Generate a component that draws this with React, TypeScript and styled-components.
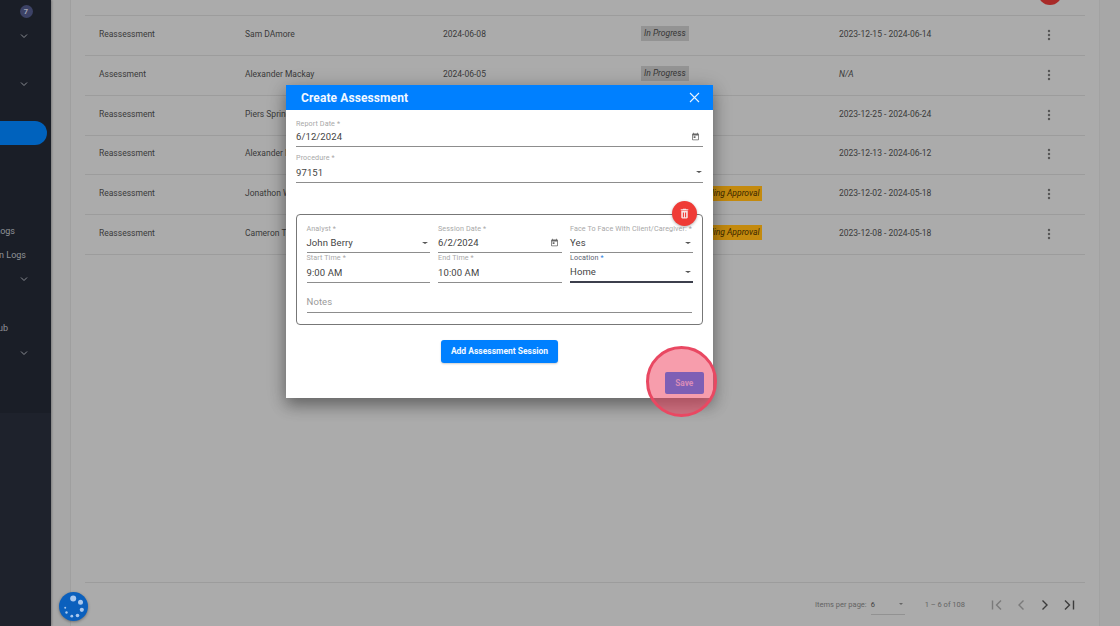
import React from 'react';
import styled, { createGlobalStyle } from 'styled-components';

const Global = createGlobalStyle`
  html, body { margin: 0; padding: 0; height: 626px; overflow: hidden; }
  body { font-family: Roboto, "Liberation Sans", sans-serif; }
  * { box-sizing: border-box; }
`;

const Page = styled.div`
  position: relative; width: 1120px; height: 626px; display: flex; overflow: hidden; background: #a7a7a7;
`;
const Sidebar = styled.aside`
  width: 51px; flex: none; height: 626px; background: #1e222c; display: flex; flex-direction: column; box-shadow: 1px 0 2px rgba(0,0,0,.25);
`;
const SideTop = styled.div`
  height: 414px; background: #1a1e27; margin-top: -1px; display: flex; flex-direction: column; padding-right: 4px;
`;
const SideItem = styled.div<{ $active?: boolean }>`
  height: 24.4px; flex: none; display: flex; align-items: center; justify-content: flex-end;
  font-size: 9px; color: #8f9297; overflow: hidden;
  ${p => p.$active ? 'background:#0062bd;border-radius:0 12px 12px 0;' : ''}
`;
const SideLabel = styled.span<{ $right: number }>`
  margin-right: ${p => p.$right}px; white-space: nowrap;
`;
const Chevron = styled.svg`
  width: 8px; height: 6px; margin-right: 19.5px; color: #8a8d93;
`;
const Badge = styled.span`
  width: 13px; height: 13px; border-radius: 50%; background: #3c4266; color: #a7a9b5; font-size: 7.5px; font-weight: 700;
  display: flex; align-items: center; justify-content: center; margin-right: 14.5px; margin-top: 1px;
`;
const Main = styled.main`
  flex: 1; min-width: 0; height: 626px; padding-left: 19px; padding-right: 20px; display: flex;
`;
const Panel = styled.section`
  flex: 1; min-width: 0; border-left: 1px solid #9f9f9f; border-right: 1px solid #a2a2a2; background: #ababab;
  padding: 0 14px; display: flex; flex-direction: column;
`;
const TableArea = styled.div`
  flex: 1; padding-top: 15px; min-height: 0;
`;
const Row = styled.div`
  height: 39.85px; display: grid; grid-template-columns: 146px 198px 198px 198px 202px 1fr; align-items: center;
  border-top: 1px solid #9c9c9c; padding-left: 14px; font-size: 8.5px; color: #3a3a3a; padding-bottom: 3px;
  &:last-child { border-bottom: 1px solid #9c9c9c; height: 40.5px; }
`;
const Status = styled.span<{ $amber?: boolean }>`
  justify-self: start; font-style: italic; padding: 0 3px; height: 15px; line-height: 15px; white-space: nowrap;
  background: ${p => p.$amber ? '#c48a0e' : '#939393'}; color: ${p => p.$amber ? '#3a2800' : '#363636'};
  margin-left: ${p => p.$amber ? 51 : 0}px;
`;
const Italic = styled.span` font-style: italic; `;
const Actions = styled.span`
  display: flex; justify-content: flex-end; padding-right: 34px; margin-top: 2px;
`;
const Footer = styled.footer`
  height: 44px; flex: none; border-top: 1px solid #9c9c9c; display: flex; align-items: center; justify-content: flex-end;
  font-size: 7.5px; color: #636363; padding-right: 4px;
`;
const PerPage = styled.span` margin-right: 4px; `;
const PageSelect = styled.span`
  width: 34px; height: 21px; border-bottom: 1px solid #929292; display: flex; align-items: center; justify-content: space-between;
  padding-right: 2px; color: #3f3f3f;
`;
const Range = styled.span` margin: 0 20px 0 20px; `;
const PageIcon = styled.svg<{ $dim?: boolean }>`
  width: 24px; height: 24px; color: ${p => p.$dim ? '#7a7a7a' : '#3c3c3c'};
`;
const Caret = styled.span`
  width: 0; height: 0; border-left: 2.5px solid transparent; border-right: 2.5px solid transparent; border-top: 2.5px solid #666;
  flex: none;
`;
const TopFab = styled.div`
  position: absolute; left: 1038px; top: -19px; width: 24px; height: 24px; border-radius: 50%; background: #a82a28;
`;
const Widget = styled.div`
  position: absolute; left: 58.5px; top: 591.5px; width: 29.5px; height: 29.5px; border-radius: 50%; background: #0b60bd; box-shadow: 0 1px 3px rgba(0,0,0,.35);
  svg { display: block; }
`;
const Dialog = styled.div`
  position: absolute; left: 286px; top: 85px; width: 427px; height: 313px; background: #fff; display: flex; flex-direction: column;
  box-shadow: 0 8px 14px rgba(0,0,0,.28), 0 3px 18px rgba(0,0,0,.22);
`;
const DialogHead = styled.header`
  height: 25px; flex: none; background: #0080ff; display: flex; align-items: center; justify-content: space-between;
  padding: 0 13px 0 15px; color: #f2f8ff; font-size: 12px; font-weight: 700; letter-spacing: .1px;
`;
const Body = styled.div`
  flex: 1; padding: 10px 10px 0 10px; display: flex; flex-direction: column;
`;
const Field = styled.div<{ $focus?: boolean; $h: number }>`
  display: flex; flex-direction: column; height: ${p => p.$h}px; min-width: 0;
  padding-bottom: ${p => p.$h === 27 ? 2 : 0}px;
  border-bottom: ${p => p.$focus ? '2px solid #3c3f4c' : '1px solid #8d8d8d'};
`;
const Label = styled.label<{ $blue?: boolean }>`
  font-size: 7.2px; line-height: 8px; color: ${p => p.$blue ? '#5a6270' : '#a8a8a8'}; white-space: nowrap; letter-spacing: .1px;
  b { font-weight: 400; color: #2a7fe0; }
`;
const Value = styled.div`
  flex: 1; display: flex; align-items: center; justify-content: space-between; font-size: 9.5px; color: #444; letter-spacing: .1px;
`;
const Placeholder = styled(Value)` color: #9a9a9a; `;
const Procedure = styled.div` margin-top: 7px; `;
const SessionBox = styled.div`
  position: relative; margin-top: 31px; height: 111px; border: 1px solid #777; border-radius: 4px; padding: 10px 10px 0 9.5px;
  display: flex; flex-direction: column;
`;
const Grid3 = styled.div`
  display: grid; grid-template-columns: 123.5px 124px 123px; column-gap: 8px; row-gap: 1px;
`;
const NotesField = styled.div`
  margin-top: 7px; height: 23px; border-bottom: 1px solid #8d8d8d; display: flex;
`;
const DeleteFab = styled.div`
  position: absolute; right: 5px; top: -14px; width: 25px; height: 25px; border-radius: 50%; background: #ef3b36;
  box-shadow: 0 1px 3px rgba(0,0,0,.3); display: flex; align-items: center; justify-content: center;
`;
const AddRow = styled.div`
  display: flex; justify-content: center; margin-top: 15px;
`;
const AddButton = styled.button`
  width: 116.5px; height: 22.5px; background: #0080ff; color: #f4f9ff; border: 0; border-radius: 3px; font: 700 8.5px Roboto, sans-serif;
  padding: 0; box-shadow: 0 1px 2px rgba(0,0,0,.2);
`;
const Highlight = styled.div`
  position: absolute; left: 646px; top: 345.5px; width: 71px; height: 71px; border-radius: 50%;
  background: rgba(240, 60, 90, .5); border: 3px solid #e94862; display: flex;
`;
const SaveButton = styled.button`
  position: absolute; left: 16px; top: 23.5px; width: 38.5px; height: 21.5px; background: #7e5fb5; color: #d88cb8; border: 0; border-radius: 2px;
  font: 700 8.3px Roboto, sans-serif; padding: 0;
`;
const Cal = styled.svg` width: 9px; height: 9px; color: #666; flex: none; margin-right: 3px; `;
const Drop = styled.span`
  width: 0; height: 0; border-left: 3px solid transparent; border-right: 3px solid transparent; border-top: 2.5px solid #555; margin-right: 2.5px; flex: none;
`;
const ProcedureDrop = styled(Drop)` margin-right: 1.5px; `;

const CalendarIcon = () => (
  <Cal viewBox="0 0 24 24" fill="currentColor">
    <path d="M19 4h-1V2h-2v2H8V2H6v2H5c-1.1 0-2 .9-2 2v14c0 1.1.9 2 2 2h14c1.1 0 2-.9 2-2V6c0-1.1-.9-2-2-2zm0 16H5V9h14v11zM7 11h5v5H7z" />
  </Cal>
);
const Down = () => (
  <Chevron viewBox="0 0 8 6" fill="none" stroke="currentColor" strokeWidth="1">
    <path d="M1 1.5 4 4.5 7 1.5" />
  </Chevron>
);

const rows = [
  ['Reassessment', 'Sam DAmore', '2024-06-08', 'progress', '2023-12-15 - 2024-06-14'],
  ['Assessment', 'Alexander Mackay', '2024-06-05', 'progress', 'N/A'],
  ['Reassessment', 'Piers Spring', '', '', '2023-12-25 - 2024-06-24'],
  ['Reassessment', 'Alexander M', '', '', '2023-12-13 - 2024-06-12'],
  ['Reassessment', 'Jonathon W', '', 'approval', '2023-12-02 - 2024-05-18'],
  ['Reassessment', 'Cameron T', '', 'approval', '2023-12-08 - 2024-05-18'],
];

const sideItems: React.ReactNode[] = [
  <Badge key="b">7</Badge>, <Down key="d1" />, null, <Down key="d2" />, null, null, null, null, null,
  <SideLabel key="l1" $right={32}>Logs</SideLabel>, <SideLabel key="l2" $right={21}>n Logs</SideLabel>, <Down key="d3" />, null,
  <SideLabel key="l3" $right={39}>ub</SideLabel>, <Down key="d4" />,
];

function Input({ label, children, blue, focus, h = 28 }: { label: string; children: React.ReactNode; blue?: boolean; focus?: boolean; h?: number }) {
  return (
    <Field $focus={focus} $h={h}>
      {blue ? <Label $blue>{label} <b>*</b></Label> : <Label>{label} *</Label>}
      <Value>{children}</Value>
    </Field>
  );
}

export default function App() {
  return (
    <Page>
      <Global />
      <Sidebar>
        <SideTop>
          {sideItems.map((it, i) => <SideItem key={i} $active={i === 5}>{it}</SideItem>)}
        </SideTop>
      </Sidebar>
      <Main>
        <Panel>
          <TableArea>
            {rows.map((r, i) => (
              <Row key={i}>
                <span>{r[0]}</span>
                <span>{r[1]}</span>
                <span>{r[2]}</span>
                {r[3] === 'progress' ? <Status>In Progress</Status> : r[3] === 'approval' ? <Status $amber>Pending Approval</Status> : <span />}
                {r[4] === 'N/A' ? <Italic>N/A</Italic> : <span>{r[4]}</span>}
                <Actions>
                  <svg width="4" height="12" viewBox="0 0 4 12" fill="#555"><circle cx="2" cy="2" r="1.2" /><circle cx="2" cy="6" r="1.2" /><circle cx="2" cy="10" r="1.2" /></svg>
                </Actions>
              </Row>
            ))}
          </TableArea>
          <Footer>
            <PerPage>Items per page:</PerPage>
            <PageSelect>6<Caret /></PageSelect>
            <Range>1 – 6 of 108</Range>
            <PageIcon $dim viewBox="0 0 24 24" fill="none" stroke="currentColor" strokeWidth="1.4"><path d="M7.5 7.5v9M16 7.5 11.5 12 16 16.5" /></PageIcon>
            <PageIcon $dim viewBox="0 0 24 24" fill="none" stroke="currentColor" strokeWidth="1.4"><path d="M14.5 7.5 10 12l4.5 4.5" /></PageIcon>
            <PageIcon viewBox="0 0 24 24" fill="none" stroke="currentColor" strokeWidth="1.4"><path d="M9.5 7.5 14 12l-4.5 4.5" /></PageIcon>
            <PageIcon viewBox="0 0 24 24" fill="none" stroke="currentColor" strokeWidth="1.4"><path d="M8 7.5 12.5 12 8 16.5M16.5 7.5v9" /></PageIcon>
          </Footer>
        </Panel>
      </Main>
      <TopFab />
      <Widget>
        <svg width="30" height="30" viewBox="0 0 30 30" fill="#a9c8ee">
          <circle cx="14.2" cy="6.5" r="3" /><circle cx="21.5" cy="10.2" r="2.5" /><circle cx="22.8" cy="17.8" r="2.1" /><circle cx="18.5" cy="23.5" r="1.8" /><circle cx="12.8" cy="24.2" r="1.4" /><circle cx="7.5" cy="20.5" r="1.2" /><circle cx="6.2" cy="15.8" r="1" />
        </svg>
      </Widget>
      <Dialog>
        <DialogHead>
          Create Assessment
          <svg width="11" height="11" viewBox="0 0 11 11" stroke="#eaf4ff" strokeWidth="1.1" fill="none"><path d="M1 1l9 9M10 1l-9 9" /></svg>
        </DialogHead>
        <Body>
          <Input label="Report Date" h={27}>6/12/2024<CalendarIcon /></Input>
          <Procedure>
            <Input label="Procedure" h={29}>97151<ProcedureDrop /></Input>
          </Procedure>
          <SessionBox>
            <DeleteFab>
              <svg width="13" height="13" viewBox="0 0 24 24" fill="#f8e4e4"><path d="M6 19c0 1.1.9 2 2 2h8c1.1 0 2-.9 2-2V7H6v12zm3-9h2v9H9v-9zm4 0h2v9h-2v-9zM15.5 4l-1-1h-5l-1 1H5v2h14V4z" /></svg>
            </DeleteFab>
            <Grid3>
              <Input label="Analyst">John Berry<Drop /></Input>
              <Input label="Session Date">6/2/2024<CalendarIcon /></Input>
              <Input label="Face To Face With Client/Caregiver:">Yes<Drop /></Input>
              <Input label="Start Time" h={29}>9:00 AM</Input>
              <Input label="End Time" h={29}>10:00 AM</Input>
              <Input label="Location" blue focus h={29}>Home<Drop /></Input>
            </Grid3>
            <NotesField><Placeholder>Notes</Placeholder></NotesField>
          </SessionBox>
          <AddRow><AddButton>Add Assessment Session</AddButton></AddRow>
        </Body>
      </Dialog>
      <Highlight>
        <SaveButton>Save</SaveButton>
      </Highlight>
    </Page>
  );
}
